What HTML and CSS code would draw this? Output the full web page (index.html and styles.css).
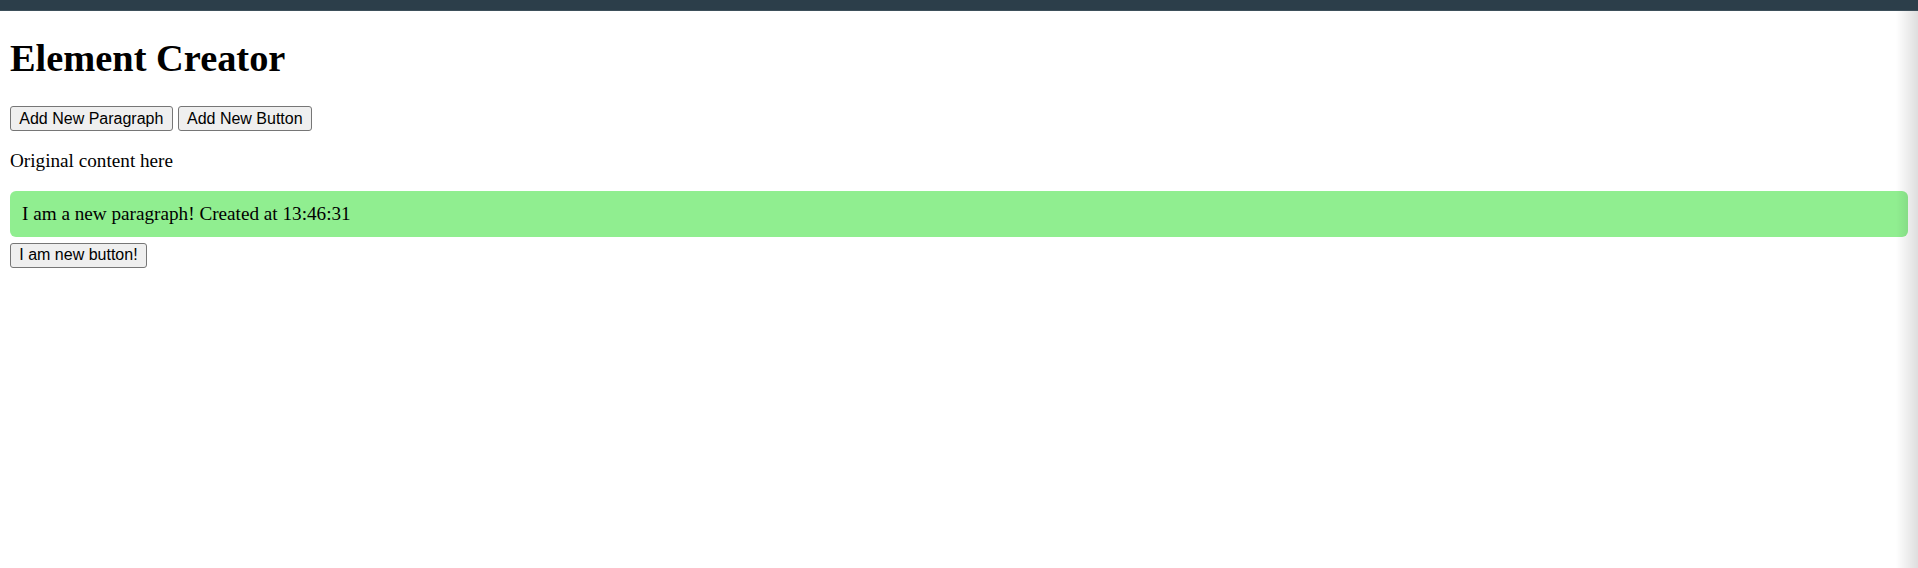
FILE: index.html
```html
<!DOCTYPE html>
<html lang="en">
<head>
<meta charset="utf-8">
<title>Element Creator</title>
<link rel="stylesheet" href="styles.css">
</head>
<body>
<div class="topbar"></div>
<main class="page">
  <h1 class="title">Element Creator</h1>
  <div class="actions">
    <button class="btn">Add New Paragraph</button>
    <button class="btn">Add New Button</button>
  </div>
  <div class="content">
    <p class="original">Original content here</p>
    <p class="created">I am a new paragraph! Created at 13:46:31</p>
    <div class="new-btn-row"><button class="btn">I am new button!</button></div>
  </div>
</main>
<div class="edge-shadow"></div>
</body>
</html>
```

FILE: styles.css
```css
html, body {
  margin: 0;
  padding: 0;
  background: #ffffff;
  height: 100%;
}
body {
  font-family: "Liberation Serif", "Times New Roman", serif;
  color: #000;
  position: relative;
  overflow: hidden;
}
.topbar {
  height: 11px;
  background: #2c3e4a;
  border-bottom: 1px solid #3d4f5a;
  box-sizing: border-box;
}
.page {
  padding: 0 10px;
}
.title {
  margin: 0;
  padding-top: 25px;
  font-size: 38.4px;
  line-height: 44px;
  font-weight: bold;
}
.actions {
  display: flex;
  gap: 5px;
  margin-top: 26px;
}
.btn {
  font-family: "Liberation Sans", Arial, sans-serif;
  font-size: 16px;
  height: 25px;
  line-height: 20px;
  padding: 1px 8.3px;
  border: 1px solid #767676;
  border-radius: 3px;
  background: #efefef;
  color: #000;
  box-sizing: border-box;
}
.content {
  display: flex;
  flex-direction: column;
}
.original {
  margin: 18.5px 0 0;
  font-size: 19.2px;
  line-height: 22px;
}
.created {
  margin: 19px 0 0;
  padding: 12px;
  font-size: 19.2px;
  line-height: 22px;
  background: #90ee90;
  border-radius: 6px;
}
.new-btn-row {
  margin-top: 6px;
  display: flex;
}
.edge-shadow {
  position: absolute;
  top: 11px;
  right: 0;
  bottom: 0;
  width: 22px;
  background: linear-gradient(to right, rgba(0,0,0,0), rgba(0,0,0,0.13));
  pointer-events: none;
}
```
